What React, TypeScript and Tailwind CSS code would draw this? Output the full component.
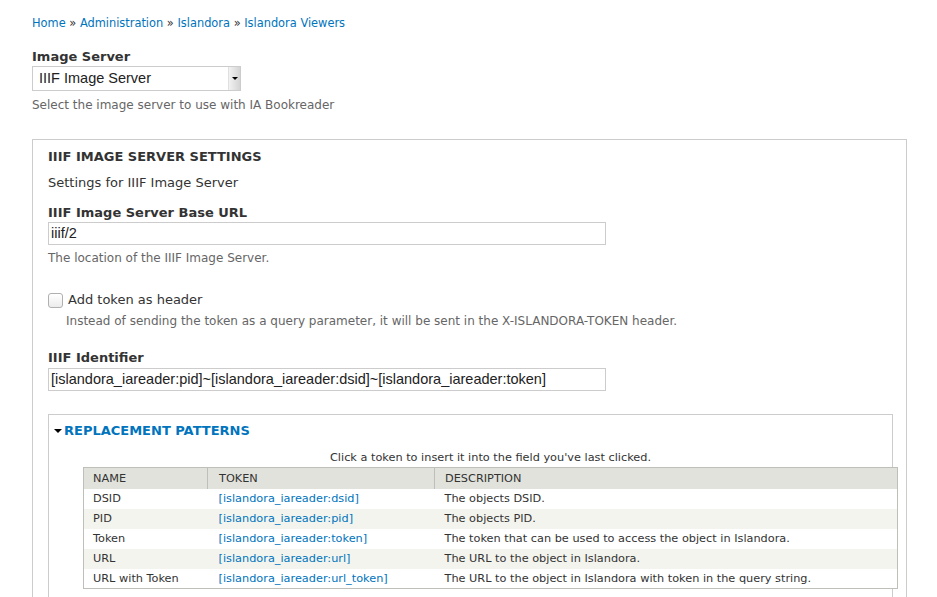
import React from 'react';

const rows = [
  { name: 'DSID', token: '[islandora_iareader:dsid]', desc: 'The objects DSID.' },
  { name: 'PID', token: '[islandora_iareader:pid]', desc: 'The objects PID.' },
  { name: 'Token', token: '[islandora_iareader:token]', desc: 'The token that can be used to access the object in Islandora.' },
  { name: 'URL', token: '[islandora_iareader:url]', desc: 'The URL to the object in Islandora.' },
  { name: 'URL with Token', token: '[islandora_iareader:url_token]', desc: 'The URL to the object in Islandora with token in the query string.' },
];

const App: React.FC = () => {
  return (
    <div className="min-h-screen bg-white text-[#333] font-['DejaVu_Sans',sans-serif] pl-[32px] pt-[15px] overflow-hidden">
      {/* Breadcrumb */}
      <div className="text-[11.4px] leading-4 text-[#0074bd]">
        <a href="#">Home</a> <span className="text-[#333]">»</span> <a href="#">Administration</a>{' '}
        <span className="text-[#333]">»</span> <a href="#">Islandora</a> <span className="text-[#333]">»</span>{' '}
        <a href="#">Islandora Viewers</a>
      </div>

      {/* Image server select */}
      <div className="mt-[16px]">
        <div className="text-[13px] leading-[18px] font-bold pt-px">Image Server</div>
        <div className="w-[209px] h-[25px] border border-[#ccc] flex items-center bg-white">
          <span className="flex-1 pl-[6px] font-['Liberation_Sans',sans-serif] text-[14.5px] text-[#222]">IIIF Image Server</span>
          <div className="w-[12px] h-full bg-gradient-to-r from-[#f2f2f2] to-[#d4d4d4] border-l border-[#e0e0e0] flex items-center justify-center">
            <div className="w-0 h-0 border-l-[3px] border-r-[3px] border-t-[3px] border-l-transparent border-r-transparent border-t-black" />
          </div>
        </div>
        <div className="mt-[6px] text-[12px] leading-4 text-[#666]">Select the image server to use with IA Bookreader</div>
      </div>

      {/* Settings fieldset */}
      <div className="mt-[26px] w-[875px] border border-[#ccc] border-b-0 px-[15px] pt-[8px] pb-[20px]">
        <div className="text-[13px] leading-[18px] font-bold uppercase">IIIF Image Server Settings</div>
        <div className="mt-[8px] text-[13px] leading-[18px]">Settings for IIIF Image Server</div>

        <div className="mt-[12px] text-[13px] leading-[18px] font-bold">IIIF Image Server Base URL</div>
        <div className="w-[558px] h-[23px] border border-[#ccc] flex items-center pl-[2px] font-['Liberation_Sans',sans-serif] text-[14.5px] text-[#222]">
          iiif/2
        </div>
        <div className="mt-[5px] text-[12px] leading-4 text-[#666]">The location of the IIIF Image Server.</div>

        <div className="mt-[25px] flex items-center h-[18px]">
          <div className="w-[15px] h-[15px] rounded-[3px] border border-[#b0b0b0] bg-gradient-to-b from-white to-[#ececec]" />
          <span className="ml-[5px] text-[13px]">Add token as header</span>
        </div>
        <div className="mt-[4px] ml-[18px] text-[12px] leading-4 text-[#666]">
          Instead of sending the token as a query parameter, it will be sent in the X-ISLANDORA-TOKEN header.
        </div>

        <div className="mt-[20px] text-[13px] leading-[18px] font-bold">IIIF Identifier</div>
        <div className="mt-[1px] w-[558px] h-[23px] border border-[#ccc] flex items-center pl-[2px] font-['Liberation_Sans',sans-serif] text-[14.5px] text-[#222]">
          [islandora_iareader:pid]~[islandora_iareader:dsid]~[islandora_iareader:token]
        </div>

        {/* Replacement patterns */}
        <div className="mt-[23px] w-[845px] border border-[#ccc] border-b-0 pt-[7px] pb-[20px]">
          <div className="flex items-center pl-[5px] h-[18px]">
            <div className="w-0 h-0 border-l-[4px] border-r-[4px] border-t-[4px] border-l-transparent border-r-transparent border-t-black" />
            <span className="ml-[2px] text-[13px] font-bold uppercase text-[#0074bd]">Replacement patterns</span>
          </div>

          <div className="ml-[34px] w-[815px] mt-[10px]">
            <div className="text-center text-[11.3px] leading-4">Click a token to insert it into the field you've last clicked.</div>
            <table className="mt-[1px] w-full border border-[#bebfb9] text-[11.3px] border-collapse">
              <thead>
                <tr className="bg-[#e1e2dc] h-[21px] text-left">
                  <th className="font-normal uppercase pl-[9px] pt-[2px] w-[124px] border-r border-[#bebfb9]">Name</th>
                  <th className="font-normal uppercase pl-[11px] pt-[2px] w-[227px] border-r border-[#bebfb9]">Token</th>
                  <th className="font-normal uppercase pl-[10px] pt-[2px]">Description</th>
                </tr>
              </thead>
              <tbody>
                {rows.map((r, i) => (
                  <tr key={r.name} className={`h-[20px] ${i % 2 === 1 ? 'bg-[#f3f4ee]' : 'bg-white'}`}>
                    <td className="pl-[9px] pt-[2px]">{r.name}</td>
                    <td className="pl-[11px] pt-[2px] text-[#0074bd]">{r.token}</td>
                    <td className="pl-[10px] pt-[2px]">{r.desc}</td>
                  </tr>
                ))}
              </tbody>
            </table>
          </div>
        </div>
      </div>
    </div>
  );
};

export default App;
